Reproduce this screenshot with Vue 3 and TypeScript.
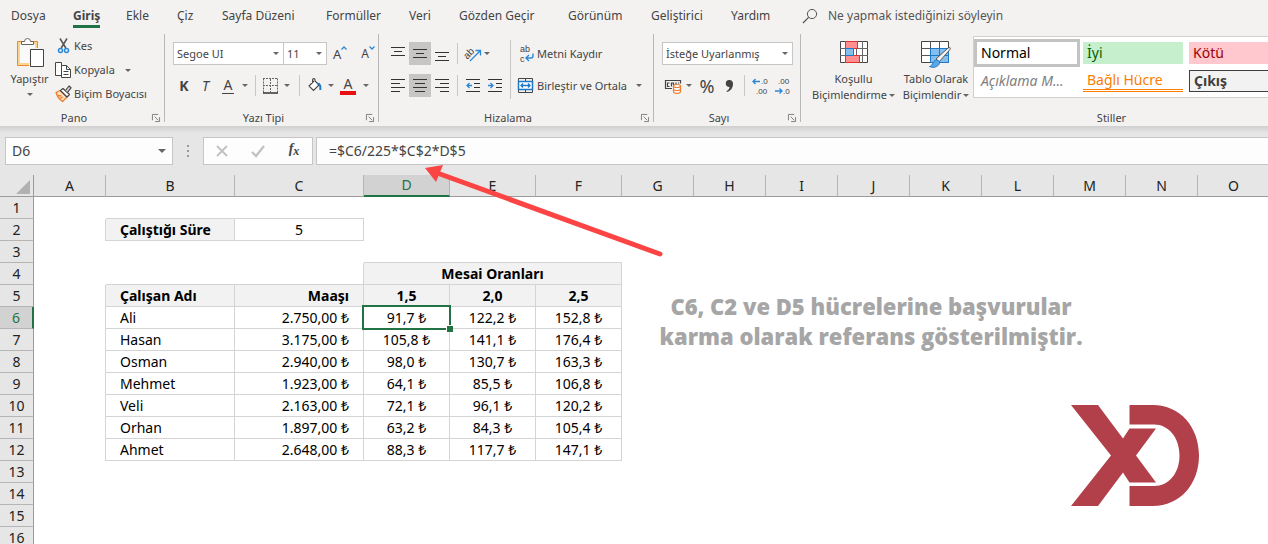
<script setup lang="ts">
import { ref } from 'vue'

interface Cell {
  text: string
  kind: string
  span: number
}

const tabs: string[] = ['Dosya', 'Giriş', 'Ekle', 'Çiz', 'Sayfa Düzeni', 'Formüller', 'Veri', 'Gözden Geçir', 'Görünüm', 'Geliştirici', 'Yardım']
const activeTab = ref('Giriş')
const nameBox = ref('D6')
const formula = ref('=$C6/225*$C$2*D$5')

const columns: string[] = 'ABCDEFGHIJKLMNO'.split('')
const rows: number[] = Array.from({ length: 16 }, (_, i) => i + 1)

const employees: string[][] = [
  ['Ali', '2.750,00 ₺', '91,7 ₺', '122,2 ₺', '152,8 ₺'],
  ['Hasan', '3.175,00 ₺', '105,8 ₺', '141,1 ₺', '176,4 ₺'],
  ['Osman', '2.940,00 ₺', '98,0 ₺', '130,7 ₺', '163,3 ₺'],
  ['Mehmet', '1.923,00 ₺', '64,1 ₺', '85,5 ₺', '106,8 ₺'],
  ['Veli', '2.163,00 ₺', '72,1 ₺', '96,1 ₺', '120,2 ₺'],
  ['Orhan', '1.897,00 ₺', '63,2 ₺', '84,3 ₺', '105,4 ₺'],
  ['Ahmet', '2.648,00 ₺', '88,3 ₺', '117,7 ₺', '147,1 ₺'],
]

const values: Record<string, [string, string]> = {
  B2: ['Çalıştığı Süre', 'head left'],
  C2: ['5', 'center'],
  D4: ['Mesai Oranları', 'head center'],
  B5: ['Çalışan Adı', 'head left'],
  C5: ['Maaşı', 'head right'],
  D5: ['1,5', 'head center'],
  E5: ['2,0', 'head center'],
  F5: ['2,5', 'head center'],
}
employees.forEach((line, i) => {
  line.forEach((text, j) => {
    values[columns[j + 1] + (i + 6)] = [text, j === 0 ? 'left' : j === 1 ? 'right' : 'center']
  })
})

function inside(row: number, col: number): boolean {
  if (row === 2) return col === 1 || col === 2
  if (row === 4) return col >= 3 && col <= 5
  return row >= 5 && row <= 12 && col >= 1 && col <= 5
}

function cellsOf(row: number): Cell[] {
  const out: Cell[] = []
  columns.forEach((name, col) => {
    if (row === 4 && (col === 4 || col === 5)) return
    const found = values[name + row]
    const lines =
      (inside(row, col) || inside(row, col + 1) ? ' line-r' : '') +
      (inside(row, col) || inside(row + 1, col) ? ' line-b' : '')
    out.push({
      text: found ? found[0] : '',
      kind: (found ? found[1] : '') + lines + (name + row === 'D6' ? ' active' : ''),
      span: name + row === 'D4' ? 3 : 1,
    })
  })
  return out
}
</script>

<template>
  <main class="app">
    <header class="ribbon">
      <nav class="tabs">
        <button v-for="t in tabs" :key="t" type="button" :class="{ on: t === activeTab }" @click="activeTab = t">
          <span>{{ t }}</span>
        </button>
        <label class="search">
          <svg width="16" height="16" viewBox="0 0 16 16" fill="none" stroke="#555"><circle cx="10" cy="6" r="4.6" /><path d="M6.6 9.4 1 15" stroke-width="1.3" /></svg>
          <input type="text" placeholder="Ne yapmak istediğinizi söyleyin" aria-label="Ara" />
        </label>
      </nav>

      <div class="groups">
        <section class="group clip">
          <div class="body">
            <button type="button" class="paste">
              <svg width="28" height="32" viewBox="0 0 28 32">
                <path d="M1.5 4.5h20v24h-20z" fill="#fbd68c" stroke="#ed8733" />
                <path d="M4 7h15v19H4z" fill="#fafafa" />
                <path d="M5.5 7.5v-3h3a3 3 0 0 1 6 0h3v3z" fill="#fff" stroke="#666" />
                <path d="M13 11h15v20H13z" fill="#f3f2f1" />
                <path d="M14.500 12.500h13v17h-13z" fill="#fff" stroke="#444" />
              </svg>
              <span>Yapıştır</span>
              <svg class="caret" viewBox="0 0 6 3"><path d="M0 0h6L3 3z" /></svg>
            </button>
            <div class="clip-list">
              <button type="button">
                <svg width="18" height="18" viewBox="0 0 18 18" fill="none">
                  <path d="M5 1.500 10.800 11M12 1.500 6.200 11" stroke="#555" stroke-width="1.500" />
                  <circle cx="5.500" cy="13.500" r="2" stroke="#2b88d8" stroke-width="1.500" /><circle cx="11.500" cy="13.500" r="2" stroke="#2b88d8" stroke-width="1.500" />
                </svg>
                <span>Kes</span>
              </button>
              <button type="button">
                <svg width="18" height="18" viewBox="0 0 18 18" fill="#fff" stroke="#444">
                  <path d="M.5 1.500h6v13h-6z" /><path d="M6.500 4.500h5l4 4v8h-9z" /><path d="M11.500 4.500v4h4M8.500 10.500h5M8.500 13.500h5" fill="none" />
                </svg>
                <span>Kopyala</span>
                <svg class="caret" viewBox="0 0 6 3"><path d="M0 0h6L3 3z" /></svg>
              </button>
              <button type="button">
                <svg width="18" height="18" viewBox="0 0 18 18" stroke-linejoin="round">
                  <path d="M1 7.500 5 5.500l7 6.500-4.500 4.500C5 15 2.500 12 1 7.500z" fill="#fde3c0" stroke="#ed7d31" stroke-width="1.300" />
                  <path d="M3 10.500 6.500 11M5 13.500l3-1.500" stroke="#ed7d31" stroke-width="1.300" />
                  <path d="m5.500 5.500 2.500-2 6.500 6-2.500 2.500z" fill="#fff" stroke="#444" stroke-width="1.200" />
                  <path d="m10.500 5.500 3.500-4.500 2 1.800-3.500 4.500" fill="#ddd" stroke="#444" stroke-width="1.200" />
                </svg>
                <span>Biçim Boyacısı</span>
              </button>
            </div>
          </div>
          <footer><span>Pano</span><svg class="launch" viewBox="0 0 9 9"><path d="M.5 7V.5H7M3 3l4 4M8.500 3.500v5h-5" /></svg></footer>
        </section>

        <section class="group font">
          <div class="body stack">
            <div class="line">
              <label class="pick face"><select aria-label="Yazı Tipi"><option>Segoe UI</option></select><svg class="caret" viewBox="0 0 6 3"><path d="M0 0h6L3 3z" /></svg></label>
              <label class="pick size"><select aria-label="Yazı Tipi Boyutu"><option>11</option></select><svg class="caret" viewBox="0 0 6 3"><path d="M0 0h6L3 3z" /></svg></label>
              <button type="button" class="grow" aria-label="Büyüt"><span>A</span><svg width="6" height="4" viewBox="0 0 6 4"><path d="m.5 3.500 2.500-2.500 2.500 2.500" /></svg></button>
              <button type="button" class="grow small" aria-label="Küçült"><span>A</span><svg width="6" height="4" viewBox="0 0 6 4"><path d="m.5.5 2.500 2.500L5.500.5" /></svg></button>
            </div>
            <div class="line tools font-tools">
              <button type="button" class="bold">K</button>
              <button type="button" class="italic">T</button>
              <button type="button" class="under"><span>A</span></button>
              <svg class="caret" viewBox="0 0 6 3"><path d="M0 0h6L3 3z" /></svg>
              <i class="sep"></i>
              <button type="button" aria-label="Kenarlıklar">
                <svg width="15" height="16" viewBox="0 0 15 16" fill="none" stroke="#666"><path d="M.5.500v14M14.500.5v14M0 .5h15M7.500 1v13M0 7.500h15" stroke-dasharray="2 1" /><path d="M0 15h15" stroke="#333" stroke-width="1.500" /></svg>
              </button>
              <svg class="caret" viewBox="0 0 6 3"><path d="M0 0h6L3 3z" /></svg>
              <i class="sep"></i>
              <button type="button" aria-label="Dolgu Rengi">
                <svg width="16" height="16" viewBox="0 0 16 16" fill="none" stroke="#444" stroke-width="1.100"><path d="M7 3 2 8l4.500 4.500 5.500-5.500-4-4V1.800a1.200 1.200 0 0 0-2.400 0V5" fill="#fff" /><path d="M10.500 5.500c3 0 3 3 2.800 6.500" stroke="#1e78c8" stroke-width="2" /></svg>
              </button>
              <svg class="caret" viewBox="0 0 6 3"><path d="M0 0h6L3 3z" /></svg>
              <button type="button" class="ink"><span>A</span></button>
              <svg class="caret" viewBox="0 0 6 3"><path d="M0 0h6L3 3z" /></svg>
            </div>
          </div>
          <footer><span>Yazı Tipi</span><svg class="launch" viewBox="0 0 9 9"><path d="M.5 7V.5H7M3 3l4 4M8.500 3.500v5h-5" /></svg></footer>
        </section>

        <section class="group align">
          <div class="body">
            <div class="stack">
              <div class="line tools align-tools">
                <button type="button" aria-label="Üste Hizala"><svg class="bars" viewBox="0 0 14 14"><path d="M0 .5h14M3 4.500h8M0 8.500h14" /></svg></button>
                <button type="button" class="pressed" aria-label="Ortaya Hizala"><svg class="bars" viewBox="0 0 14 14"><path d="M0 2.500h14M3 6.500h8M0 10.500h14" /></svg></button>
                <button type="button" aria-label="Alta Hizala"><svg class="bars" viewBox="0 0 14 14"><path d="M0 5.500h14M3 9.500h8M0 13.500h14" /></svg></button>
                <i class="sep"></i>
                <button type="button" aria-label="Yönlendirme">
                  <svg width="18" height="18" viewBox="0 0 18 18"><text x="0" y="11" font-size="10" fill="#444" transform="rotate(-45 6 9)">ab</text><path d="m6 16 10-10M11.500 5.500H16.500V10.500" fill="none" stroke="#2b88d8" stroke-width="1.300" /></svg>
                </button>
                <svg class="caret first" viewBox="0 0 6 3"><path d="M0 0h6L3 3z" /></svg>
              </div>
              <div class="line tools align-tools">
                <button type="button" aria-label="Sola Hizala"><svg class="bars" viewBox="0 0 14 14"><path d="M0 .5h14M0 4.500h9M0 8.500h14M0 12.500h9" /></svg></button>
                <button type="button" class="pressed" aria-label="Ortala"><svg class="bars" viewBox="0 0 14 14"><path d="M0 .5h14M2 4.500h10M0 8.500h14M2 12.500h10" /></svg></button>
                <button type="button" aria-label="Sağa Hizala"><svg class="bars" viewBox="0 0 14 14"><path d="M0 .5h14M5 4.500h9M0 8.500h14M5 12.500h9" /></svg></button>
                <i class="sep"></i>
                <button type="button" aria-label="Girintiyi Azalt"><svg class="bars" viewBox="0 0 14 14"><path d="M0 .5h14M8 4.500h6M8 8.500h6M0 12.500h14" /><path d="M6 6.500H1M3.500 4 1 6.500 3.500 9" stroke="#2b88d8" stroke-width="1.300" /></svg></button>
                <button type="button" aria-label="Girintiyi Artır"><svg class="bars" viewBox="0 0 14 14"><path d="M0 .5h14M8 4.500h6M8 8.500h6M0 12.500h14" /><path d="M0 6.500h5M2.500 4 5 6.500 2.500 9" stroke="#2b88d8" stroke-width="1.300" /></svg></button>
              </div>
            </div>
            <i class="sep tall"></i>
            <div class="stack wide">
              <button type="button" class="line worded">
                <svg width="18" height="18" viewBox="0 0 18 18"><text x="3" y="7" font-size="9" fill="#444">ab</text><text x="3" y="17" font-size="9" fill="#444">c</text><path d="M16 8.500v2.500q0 2-2 2H9.500M12 10 9 13l3 3" fill="none" stroke="#2b88d8" stroke-width="1.400" /></svg>
                <span>Metni Kaydır</span>
              </button>
              <button type="button" class="line worded">
                <svg width="18" height="18" viewBox="0 0 18 18" fill="none"><path d="M1.500 1.500h14v14h-14zM8.500 1v3M8.500 13v3" stroke="#444" /><path d="M1.500 4.500h14v8h-14z" fill="#fff" stroke="#1e78c8" stroke-width="1.500" /><path d="M4 8.500h9M6 6.500l-2 2 2 2M11 6.500l2 2-2 2" stroke="#1e78c8" stroke-width="1.300" /></svg>
                <span>Birleştir ve Ortala</span>
                <svg class="caret" viewBox="0 0 6 3"><path d="M0 0h6L3 3z" /></svg>
              </button>
            </div>
          </div>
          <footer><span>Hizalama</span><svg class="launch" viewBox="0 0 9 9"><path d="M.5 7V.5H7M3 3l4 4M8.500 3.500v5h-5" /></svg></footer>
        </section>

        <section class="group number">
          <div class="body stack">
            <label class="line pick"><select aria-label="Sayı Biçimi"><option>İsteğe Uyarlanmış</option></select><svg class="caret" viewBox="0 0 6 3"><path d="M0 0h6L3 3z" /></svg></label>
            <div class="line tools number-tools">
              <button type="button" aria-label="Finansal Sayı Biçimi">
                <svg width="18" height="16" viewBox="0 0 18 16" fill="none"><path d="M1.500 10.500v-8h15v3M1 10.500h7M5.500 5h-2v3.500h2M7.500 8.500V5h2v2M12 4.500v2M14.500 4.500v1" stroke="#444" stroke-width="1.200" /><path d="M9.500 8v5.500c0 2.500 7 2.500 7 0V8" fill="#fff" stroke="#ed7d31" stroke-width="1.200" /><ellipse cx="13" cy="8" rx="3.500" ry="1.500" fill="#fff" stroke="#ed7d31" stroke-width="1.200" /><path d="M9.500 11c0 2 7 2 7 0" stroke="#ed7d31" stroke-width="1.200" /></svg>
              </button>
              <svg class="caret" viewBox="0 0 6 3"><path d="M0 0h6L3 3z" /></svg>
              <button type="button" class="percent">%</button>
              <button type="button" aria-label="Virgül Stili"><svg width="9" height="14" viewBox="0 0 9 14"><path d="M4 1a3.500 3.500 0 0 1 4 4c0 4-2.500 7-6 8l-.5-1c2-1 3-2.500 3-4C2 8 .8 6.500.8 4.500.8 2.500 2 1 4 1z" fill="#444" /></svg></button>
              <i class="sep"></i>
              <button type="button" aria-label="Ondalık Artır"><svg width="18" height="18" viewBox="0 0 18 18"><text x="10" y="7" font-size="8" fill="#444">.0</text><text x="5" y="17" font-size="8" fill="#444">.00</text><path d="M9 4.500H2M4.500 2 2 4.500 4.500 7" fill="none" stroke="#2b88d8" stroke-width="1.300" /></svg></button>
              <button type="button" aria-label="Ondalık Azalt"><svg width="18" height="18" viewBox="0 0 18 18"><text x="5" y="7" font-size="8" fill="#444">.00</text><text x="10" y="17" font-size="8" fill="#444">.0</text><path d="M2 14h7M6.500 11.500 9 14l-2.500 2.500" fill="none" stroke="#2b88d8" stroke-width="1.300" /></svg></button>
            </div>
          </div>
          <footer><span>Sayı</span><svg class="launch" viewBox="0 0 9 9"><path d="M.5 7V.5H7M3 3l4 4M8.500 3.500v5h-5" /></svg></footer>
        </section>

        <section class="group styles">
          <div class="body">
            <button type="button" class="big">
              <svg width="30" height="30" viewBox="0 0 30 30" fill="none">
                <path d="M1.500 3.500h27v21h-27z" fill="#fff" stroke="#444" /><path d="M1 10.500h28M1 17.500h28M6.500 3v22M17.500 3v22M23.500 3v22" stroke="#666" />
                <path d="M6.500 3.500h12v7h-12zM6.500 17.500h14v7h-14z" fill="#ff8f8f" stroke="#e03030" /><path d="M6.500 10.500h8v7h-8z" fill="#83beec" stroke="#1e78c8" />
              </svg>
              <span>Koşullu</span>
              <span class="with-caret">Biçimlendirme<svg class="caret" viewBox="0 0 6 3"><path d="M0 0h6L3 3z" /></svg></span>
            </button>
            <button type="button" class="big table">
              <svg width="30" height="30" viewBox="0 0 30 30" fill="none">
                <path d="M.5 3.500h27v21H.5z" fill="#fff" stroke="#444" /><path d="M9.500 10.500h18v14h-18z" fill="#83beec" /><path d="M0 10.500h28M0 17.500h10M9.500 3v22M18.500 3v8" stroke="#555" /><path d="M9.500 10.500h18v14h-18zM18.500 10.500v14M9.500 17.500h18" stroke="#1e78c8" />
                <path d="m15 21 12-11q3-1.500 2 1.500L18 24z" fill="#f3f2f1" stroke="#555" /><path d="M8.500 28.500c3 0 3-6 7-6.500 3 0 4 3 2 5-2 2.300-6 3-9 1.500z" fill="#5aa7e6" stroke="#1e78c8" />
              </svg>
              <span>Tablo Olarak</span>
              <span class="with-caret">Biçimlendir<svg class="caret" viewBox="0 0 6 3"><path d="M0 0h6L3 3z" /></svg></span>
            </button>
            <div class="gallery">
              <button type="button" class="chosen">Normal</button>
              <button type="button" class="good">İyi</button>
              <button type="button" class="bad">Kötü</button>
              <button type="button" class="note">Açıklama M...</button>
              <button type="button" class="linked">Bağlı Hücre</button>
              <button type="button" class="output">Çıkış</button>
            </div>
          </div>
          <footer><span>Stiller</span></footer>
        </section>
      </div>
    </header>

    <section class="formula">
      <div class="box name">
        <input v-model="nameBox" aria-label="Ad Kutusu" />
        <svg class="caret" viewBox="0 0 6 3"><path d="M0 0h6L3 3z" /></svg>
      </div>
      <svg class="dots" width="2" height="12" viewBox="0 0 2 12" fill="#999"><path d="M0 0h2v2H0zM0 5h2v2H0zM0 10h2v2H0z" /></svg>
      <div class="box actions">
        <button type="button" aria-label="İptal"><svg width="12" height="12" viewBox="0 0 12 12"><path d="m1 1 10 10M11 1 1 11" fill="none" stroke="#c0c0c0" stroke-width="1.800" /></svg></button>
        <button type="button" aria-label="Gir"><svg width="14" height="12" viewBox="0 0 14 12"><path d="m1 7 4 4L13 1" fill="none" stroke="#c0c0c0" stroke-width="2.200" /></svg></button>
        <button type="button" class="fx">f<small>x</small></button>
      </div>
      <div class="box entry"><input v-model="formula" aria-label="Formül Çubuğu" /></div>
    </section>

    <section class="sheet">
      <table>
        <colgroup>
          <col class="w-num" />
          <col v-for="c in columns" :key="c" :class="{ 'w-wide': c === 'B' || c === 'C', 'w-mid': c === 'D' || c === 'E' || c === 'F' }" />
        </colgroup>
        <thead>
          <tr>
            <td class="corner"><svg width="14" height="14" viewBox="0 0 14 14"><path d="M14 0v14H0z" fill="#b1b1b1" /></svg></td>
            <th v-for="c in columns" :key="c" scope="col" :class="{ current: c === 'D' }">{{ c }}</th>
          </tr>
        </thead>
        <tbody>
          <tr v-for="r in rows" :key="r">
            <th scope="row" :class="{ current: r === 6 }">{{ r }}</th>
            <td v-for="(cell, i) in cellsOf(r)" :key="i" :class="cell.kind" :colspan="cell.span">{{ cell.text }}</td>
          </tr>
        </tbody>
      </table>
      <p class="remark">C6, C2 ve D5 hücrelerine başvurular<br />karma olarak referans gösterilmiştir.</p>
      <svg class="logo" width="128" height="101" viewBox="0 0 128 101" fill="#b2404a">
        <path d="M0 0h27l25 33.500 6.500-10H85L65 50.500l20 27H58.500l-6.500-10L27 101H0l40-50.500z" />
        <path d="M58.500 0H82c27 0 46 22 46 50.500S109 101 82 101H58.500V81H83c15 0 25.500-13 25.500-30.500S98 19.500 83 19.500H58.500z" />
      </svg>
    </section>
    <svg class="arrow" width="240" height="94" viewBox="0 0 240 94"><path d="M15 9 235 89" stroke="#fb4545" stroke-width="5" stroke-linecap="round" /><path d="M0 3 18 0 11 17z" fill="#fb4545" /></svg>
  </main>
</template>

<style>
body {
  background: #fff;
}
</style>

<style scoped>
.app {
  position: relative;
  display: flex;
  flex-direction: column;
  height: 100vh;
  overflow: hidden;
  font-family: 'Noto Sans', 'Open Sans', sans-serif;
  font-size: 12px;
  line-height: 16px;
  color: #444;
}
.app * {
  box-sizing: border-box;
}
button,
input,
select {
  margin: 0;
  padding: 0;
  border: 0;
  background: none;
  font: inherit;
  color: inherit;
  outline: 0;
  border-radius: 0;
  appearance: none;
}
button {
  white-space: nowrap;
}
svg {
  display: block;
  flex: none;
  overflow: visible;
}
svg text {
  font-family: 'Liberation Sans', sans-serif;
}
.caret {
  width: 6px;
  height: 3px;
  fill: #666;
}
.ribbon {
  flex: none;
  background: #f3f2f1;
  overflow: hidden;
  padding-bottom: 4px;
}
.tabs {
  display: grid;
  grid-template-columns: 62px 53px 51px 45px 104px 83px 50px 109px 83px 80px 71px 1fr;
  height: 34px;
  padding-left: 11px;
  align-items: start;
}
.tabs button {
  padding-top: 7px;
  text-align: left;
}
.tabs span {
  display: inline-block;
  line-height: 18px;
}
.tabs .on span {
  font-weight: 700;
  border-bottom: 3px solid #217346;
}
.search {
  display: flex;
  align-items: center;
  gap: 10px;
  height: 32px;
}
.search input {
  flex: 1;
  min-width: 0;
}
.search input::placeholder {
  color: #555;
  opacity: 1;
}
.groups {
  display: flex;
  font-size: 11px;
}
.group {
  flex: none;
  height: 88px;
  display: flex;
  flex-direction: column;
  border-right: 1px solid #b8b8b8;
}
.clip {
  width: 165px;
}
.font {
  width: 214px;
}
.align {
  width: 275px;
}
.number {
  width: 147px;
}
.styles {
  flex: 1 0 638px;
}
.body {
  flex: 1;
  display: flex;
}
.group footer {
  display: grid;
  grid-template-columns: 1fr 16px;
  align-items: center;
  height: 12px;
}
.group footer span {
  text-align: center;
}
.launch {
  width: 8px;
  height: 8px;
  justify-self: center;
  fill: none;
  stroke: #777;
}
.paste {
  width: 55px;
  padding: 3px 0 0 4px;
  display: flex;
  flex-direction: column;
  align-items: center;
}
.paste span {
  margin-top: 2px;
}
.paste .caret {
  margin-top: 6px;
}
.clip-list {
  display: grid;
  grid-template-rows: repeat(3, 24px);
}
.clip-list button {
  display: flex;
  align-items: center;
  gap: 1px;
}
.clip-list .caret {
  margin-left: 9px;
}
.body.stack,
.stack {
  display: flex;
  flex-direction: column;
  gap: 9px;
  padding: 8px 8px 0 8px;
}
.line {
  display: flex;
  height: 23px;
  align-items: center;
}
.pick {
  flex: none;
  display: grid;
  grid-template-columns: 1fr 10px;
  align-items: center;
  height: 23px;
  border: 1px solid #c6c6c6;
  background: #fff;
}
.pick select {
  min-width: 0;
  padding-left: 3px;
}
.face {
  width: 111px;
}
.size {
  width: 43px;
  border-left: 0;
}
.grow {
  width: 24px;
  padding-left: 6px;
  display: flex;
  font-size: 13px;
}
.grow.small {
  width: 32px;
  padding-left: 14px;
  font-size: 12px;
}
.grow svg {
  fill: none;
  stroke: #2b88d8;
  stroke-width: 1.3;
}
.tools {
  display: grid;
  justify-items: center;
}
.font-tools {
  grid-template-columns: 22px 21px 24px 9px 13px 17px 16px 8px 24px 7px 28px 7px;
  font-size: 14px;
}
.bold {
  font-weight: 700;
}
.italic {
  font-style: italic;
}
.under span {
  display: block;
  width: 12px;
  border-bottom: 1px solid #444;
}
.ink span {
  display: block;
  width: 16px;
  line-height: 14px;
  border-bottom: 4px solid #e81010;
}
.sep {
  width: 1px;
  height: 21px;
  background: #c8c8c8;
}
.sep.tall {
  height: 59px;
  margin-top: 6px;
}
.align .stack {
  padding-right: 4px;
}
.align .stack.wide {
  padding: 8px 0 0 6px;
}
.align-tools {
  grid-template-columns: 22px 22px 22px 9px 22px 22px;
}
.align-tools button {
  width: 22px;
  height: 23px;
  display: grid;
  place-items: center;
}
.pressed {
  background: #c8c6c4;
}
.first {
  justify-self: start;
}
.bars {
  width: 14px;
  height: 14px;
  fill: none;
  stroke: #333;
}
.worded {
  gap: 2px;
}
.worded .caret {
  margin-left: 7px;
}
.number .pick {
  width: 131px;
}
.number-tools {
  grid-template-columns: 22px 10px 26px 19px 10px 22px 22px;
}
.percent {
  font-size: 18px;
}
.big {
  width: 98px;
  padding: 4px 0 0 7px;
  display: flex;
  flex-direction: column;
  align-items: center;
}
.big svg:first-child {
  margin-bottom: 3px;
}
.big.table {
  width: 74px;
  padding-left: 0;
}
.with-caret {
  display: flex;
  align-items: center;
  gap: 2px;
}
.with-caret .caret.caret {
  margin: 0;
}
.gallery {
  flex: 1;
  height: 62px;
  margin-top: 2px;
  padding: 2px 0;
  display: grid;
  grid-template-columns: 106px 106px 106px;
  grid-template-rows: 28px 28px;
  align-content: start;
  align-items: center;
  background: #fff;
  border: 1px solid #d0d0d0;
  font-size: 14px;
}
.gallery button {
  width: 100px;
  height: 22px;
  margin-left: 3px;
  padding-left: 4px;
  text-align: left;
}
.gallery .chosen {
  width: 106px;
  height: 28px;
  margin-left: 0;
  border: 3px solid #c3c3c3;
  color: #000;
}
.gallery .good {
  background: #c6efce;
  color: #006100;
}
.gallery .bad {
  background: #ffc7ce;
  color: #9c0006;
}
.gallery .note {
  font-style: italic;
  color: #7f7f7f;
}
.gallery .linked {
  color: #fa7d00;
  border-bottom: 3px double #ff8001;
  line-height: 18px;
}
.gallery .output {
  color: #3f3f3f;
  background: #f2f2f2;
  border: 1px solid #3f3f3f;
  font-weight: 700;
}
.formula {
  flex: none;
  display: flex;
  align-items: center;
  height: 49px;
  padding-left: 5px;
  background: linear-gradient(#cfcfcf, #e6e6e6 7px);
  font-size: 14px;
}
.box {
  display: flex;
  align-items: center;
  height: 28px;
  background: #fdfdfd;
  border: 1px solid #c6c6c6;
}
.name {
  width: 168px;
  padding: 0 6px;
}
.name input {
  flex: 1;
  min-width: 0;
}
.name .caret {
  width: 8px;
  height: 4px;
}
.dots {
  margin: 0 14px;
}
.actions {
  width: 110px;
}
.actions button {
  width: 36px;
  display: flex;
  justify-content: center;
}
.fx {
  font-family: 'Liberation Serif', serif;
  font-style: italic;
  font-weight: 700;
}
.fx small {
  font-size: 12px;
  line-height: 20px;
}
.entry {
  flex: 1;
  margin-left: 3px;
  padding-left: 12px;
  border-right: 0;
}
.entry input {
  flex: 1;
  min-width: 0;
}
.sheet {
  position: relative;
  flex: 1;
  overflow: hidden;
  background: linear-gradient(#e6e6e6 21px, #9b9b9b 21px, #9b9b9b 22px, #fff 22px);
  font-size: 14px;
}
table {
  table-layout: fixed;
  width: 1px;
  border-spacing: 0;
  color: #000;
  line-height: 20px;
}
col {
  width: 72px;
}
.w-num {
  width: 34px;
}
.w-wide {
  width: 129px;
}
.w-mid {
  width: 86px;
}
tr {
  height: 22px;
}
td,
th {
  height: 22px;
  padding: 0;
  border: 0 solid #d4d4d4;
  font-weight: 400;
  white-space: nowrap;
}
th,
.corner {
  background: #e6e6e6;
  border-color: #9b9b9b;
  border-width: 0 1px 1px 0;
  text-align: center;
  color: #222;
}
thead th {
  border-right-color: #b5b5b5;
}
tbody th {
  border-bottom-color: #b5b5b5;
}
.corner svg {
  margin: 2px 3px 0 auto;
}
th.current {
  background: #d2d2d2;
  color: #217346;
}
thead th.current {
  border-bottom: 2px solid #217346;
}
tbody th.current {
  border-right: 2px solid #217346;
}
.line-r {
  border-right-width: 1px;
}
.line-b {
  border-bottom-width: 1px;
}
.head {
  background: #f2f2f2;
  font-weight: 700;
}
.left {
  padding-left: 14px;
}
.right {
  padding-right: 14px;
  text-align: right;
}
.center {
  text-align: center;
}
.active {
  position: relative;
}
.active::before {
  content: '';
  position: absolute;
  inset: -2px;
  border: 2px solid #217346;
}
.active::after {
  content: '';
  position: absolute;
  right: -4px;
  bottom: -4px;
  width: 6px;
  height: 6px;
  background: #217346;
  border: 1px solid #fff;
  border-width: 1px 0 0 1px;
}
.remark {
  position: absolute;
  left: 641px;
  top: 116px;
  width: 460px;
  margin: 0;
  text-align: center;
  font: 800 22px/30px 'Open Sans', sans-serif;
  color: #a6a6a6;
}
.logo {
  position: absolute;
  left: 1071px;
  top: 230px;
}
.arrow {
  position: absolute;
  left: 425px;
  top: 165px;
}
</style>
